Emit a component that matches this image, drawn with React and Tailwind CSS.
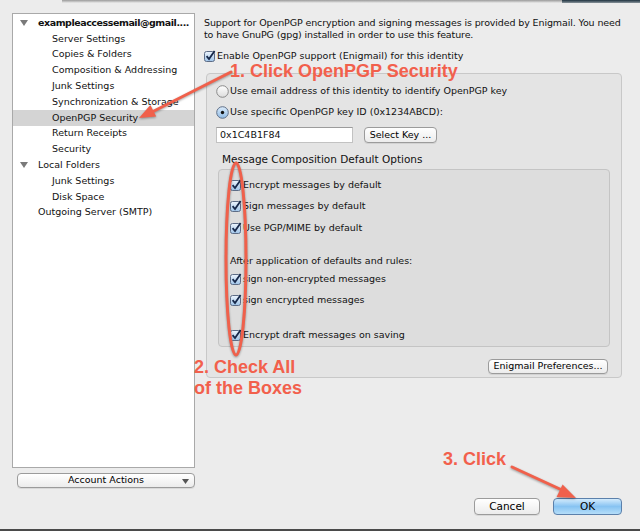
import React from "react"

const font = { fontFamily: '"DejaVu Sans", "Liberation Sans", sans-serif' }

function Check() {
  return (
    <svg width="12" height="12" viewBox="0 0 12 12" className="shrink-0">
      <defs>
        <linearGradient id="cbg" x1="0" y1="0" x2="0" y2="1">
          <stop offset="0" stopColor="#eef5fd" />
          <stop offset="1" stopColor="#9ec3e8" />
        </linearGradient>
      </defs>
      <rect x="0.5" y="1.5" width="10" height="10" rx="2" fill="url(#cbg)" stroke="#5d6c86" />
      <path d="M2.6 6.2 L5 9 L10.6 1" fill="none" stroke="#17284a" strokeWidth="1.8" />
    </svg>
  )
}

function Radio({ on }) {
  return (
    <svg width="13" height="13" viewBox="0 0 13 13" className="shrink-0">
      <defs>
        <linearGradient id="rdoff" x1="0" y1="0" x2="0" y2="1">
          <stop offset="0" stopColor="#ffffff" />
          <stop offset="1" stopColor="#dcdcdc" />
        </linearGradient>
        <linearGradient id="rdon" x1="0" y1="0" x2="0" y2="1">
          <stop offset="0" stopColor="#dcecfb" />
          <stop offset="1" stopColor="#8fbbe6" />
        </linearGradient>
      </defs>
      <circle cx="6.5" cy="6.5" r="5.8" fill={on ? "url(#rdon)" : "url(#rdoff)"} stroke={on ? "#5f6f88" : "#8a8a8a"} />
      {on && <circle cx="6.5" cy="6.5" r="1.7" fill="#111" />}
    </svg>
  )
}

function CheckRow({ children, className }) {
  return (
    <div className={"flex items-center h-[14px] " + (className || "")}>
      <Check />
      <span className="ml-[1px]">{children}</span>
    </div>
  )
}

function Btn({ children, className }) {
  return (
    <div className={"flex items-center justify-center rounded-[4px] border border-[#9b9b9b] bg-gradient-to-b from-white to-[#ececec] shadow-[0_1px_0_rgba(0,0,0,0.08)] text-black " + (className || "")}>
      {children}
    </div>
  )
}

const rows = [
  { t: "exampleaccessemail@gmail....", top: true },
  { t: "Server Settings" },
  { t: "Copies & Folders" },
  { t: "Composition & Addressing" },
  { t: "Junk Settings" },
  { t: "Synchronization & Storage" },
  { t: "OpenPGP Security", sel: true },
  { t: "Return Receipts" },
  { t: "Security" },
  { t: "Local Folders", top: true },
  { t: "Junk Settings" },
  { t: "Disk Space" },
  { t: "Outgoing Server (SMTP)", top: true, noArrow: true },
]

function Tri() {
  return (
    <svg width="8" height="7" viewBox="0 0 8 7" className="absolute left-[7px] top-[5px]">
      <path d="M0 0 H8 L4 6 Z" fill="#7a7a7a" />
    </svg>
  )
}

export default function App() {
  return (
    <div className="relative w-[640px] h-[531px] overflow-hidden bg-[#ececec] flex flex-col text-[#111]" style={font}>
      <div className="flex h-[3px]">
        <div className="w-[62px] bg-[#ececec]" />
        <div className="w-[500px] bg-gradient-to-b from-[#9a9a9a] to-[#ececec]" />
        <div className="flex-1 bg-gradient-to-b from-[#1f3340] to-[#8a959c]" />
      </div>

      <div className="flex flex-1 pl-[12px] pt-[10px]">
        <div className="w-[183px] flex flex-col">
          <div className="h-[455px] bg-white border border-[#a9a9a9] pt-[1px]">
            {rows.map((r, i) => (
              <div
                key={i}
                className={
                  "relative h-[15.8px] flex items-center text-[9.5px] whitespace-nowrap " +
                  (r.sel ? "bg-[#d4d4d4] " : "") +
                  (r.top ? "pl-[25px] " : "pl-[39px] ") +
                  (i === 0 ? "font-bold tracking-[-0.45px]" : "")
                }
              >
                {r.top && !r.noArrow && <Tri />}
                {r.t}
              </div>
            ))}
          </div>
          <Btn className="relative mt-[5px] ml-[5px] w-[178px] h-[15px] text-[9.5px]">
            Account Actions
            <svg width="7" height="5" viewBox="0 0 7 5" className="absolute right-[5px] top-[5px]">
              <path d="M0 0 H7 L3.5 5 Z" fill="#555" />
            </svg>
          </Btn>
        </div>

        <div className="ml-[9px] w-[420px] flex flex-col pt-[4px] text-[9.5px]">
          <p className="leading-[11.5px] tracking-[-0.12px]">
            Support for OpenPGP encryption and signing messages is provided by Enigmail. You need to have GnuPG (gpg) installed in order to use this feature.
          </p>
          <div className="mt-[9px]">
            <CheckRow>Enable OpenPGP support (Enigmail) for this identity</CheckRow>
          </div>

          <div className="mt-[10px] ml-[2px] w-[416px] h-[305px] rounded-[4px] border border-[#c8c8c8] bg-[#e4e4e4] flex flex-col pl-[9px] pt-[10px]">
            <div className="flex items-center h-[14px]">
              <Radio />
              <span className="ml-[1px]">Use email address of this identity to identify OpenPGP key</span>
            </div>
            <div className="flex items-center h-[14px] mt-[7px]">
              <Radio on />
              <span className="ml-[1px]">Use specific OpenPGP key ID (0x1234ABCD):</span>
            </div>
            <div className="flex items-center mt-[8px]">
              <div className="w-[137px] h-[16px] bg-white border border-[#c2c2c2] border-t-[#9c9c9c] flex items-center pl-[3px]">
                0x1C4B1F84
              </div>
              <Btn className="ml-[11px] w-[73px] h-[16px] text-[9.5px]">Select Key ...</Btn>
            </div>
            <div className="mt-[10px] ml-[6px] h-[14px] flex items-center text-[10.5px]">
              Message Composition Default Options
            </div>
            <div className="mt-[2px] ml-[2px] w-[392px] h-[178px] rounded-[4px] border border-[#c4c4c4] bg-[#dddddd] flex flex-col pl-[11px] pt-[8px]">
              <CheckRow>Encrypt messages by default</CheckRow>
              <CheckRow className="mt-[7px]">Sign messages by default</CheckRow>
              <CheckRow className="mt-[8px]">Use PGP/MIME by default</CheckRow>
              <div className="mt-[19px] h-[14px] flex items-center">After application of defaults and rules:</div>
              <CheckRow className="mt-[4px]">sign non-encrypted messages</CheckRow>
              <CheckRow className="mt-[7px]">sign encrypted messages</CheckRow>
              <CheckRow className="mt-[21px]">Encrypt draft messages on saving</CheckRow>
            </div>
            <div className="flex justify-end mt-[12px] pr-[13px]">
              <Btn className="w-[120px] h-[15px] text-[9.5px]">Enigmail Preferences...</Btn>
            </div>
          </div>

          <div className="flex justify-end mt-[120px] mr-[2px] gap-[13px]">
            <Btn className="w-[66px] h-[17px] text-[10.5px]">Cancel</Btn>
            <div className="w-[69px] h-[17px] rounded-[4px] border border-[#5b80ab] bg-gradient-to-b from-[#d3ebfc] via-[#87c3f2] to-[#b5def9] flex items-center justify-center text-[10.5px] text-black">
              OK
            </div>
          </div>
        </div>
      </div>

      <div className="h-[2px] bg-[#4a4a4a]" />

      <svg width="640" height="531" viewBox="0 0 640 531" className="absolute inset-0 pointer-events-none drop-shadow-[0_1px_1px_rgba(0,0,0,0.35)]">
        <line x1="231" y1="72" x2="152" y2="112" stroke="#f0604b" strokeWidth="3" strokeLinecap="round" />
        <path d="M139 118 L156.2 116.6 L150.4 105 Z" fill="#f0604b" />
        <ellipse cx="236" cy="259" rx="10" ry="96" fill="none" stroke="#f0604b" strokeWidth="3" />
        <line x1="512" y1="467" x2="562" y2="490" stroke="#f0604b" strokeWidth="3" strokeLinecap="round" />
        <path d="M576 498 L556.6 497 L562.6 484.4 Z" fill="#f0604b" />
      </svg>

      <div className="absolute left-[230px] top-[62px] text-[18px] leading-[18px] font-bold text-[#f2604c] whitespace-nowrap" style={{ fontFamily: '"Liberation Sans", Arial, sans-serif' }}>
        1. Click OpenPGP Security
      </div>
      <div className="absolute left-[194px] top-[357px] text-[18px] leading-[21px] font-bold text-[#f2604c]" style={{ fontFamily: '"Liberation Sans", Arial, sans-serif' }}>
        2. Check All
        <br />
        of the Boxes
      </div>
      <div className="absolute left-[443px] top-[450px] text-[18px] leading-[18px] font-bold text-[#f2604c]" style={{ fontFamily: '"Liberation Sans", Arial, sans-serif' }}>
        3. Click
      </div>
    </div>
  )
}
